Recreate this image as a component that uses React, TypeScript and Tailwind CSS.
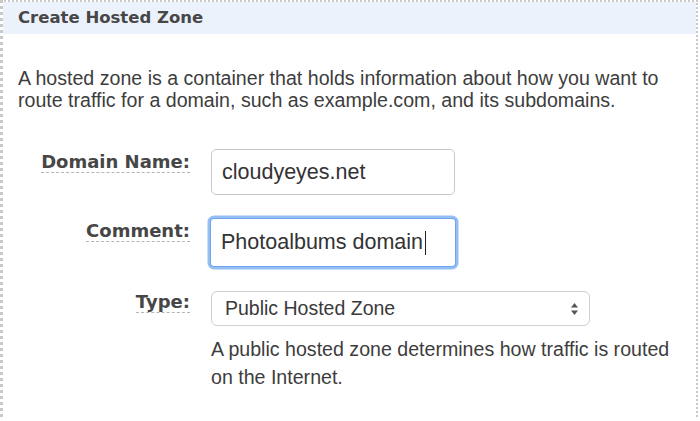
export default function App() {
  return (
    <div className="w-[700px] h-[421px] bg-white overflow-hidden font-['Liberation_Sans',Arial,sans-serif] text-[#3d3d3d]">
      <div className="w-[698px] h-[417px] border-t-2 border-l-[3px] border-r-2 border-dotted border-[#c9c9c9]">
        {/* Header */}
        <div className="h-[32px] bg-[#ebf2fc] flex items-center pl-[15px]">
          <h1 className="font-['DejaVu_Sans',Verdana,sans-serif] font-bold text-[16.5px] text-[#474747] leading-none">
            Create Hosted Zone
          </h1>
        </div>

        {/* Body */}
        <div className="pt-[33px] pl-[15px]">
          <p className="text-[19.6px] leading-[22px] w-[670px]">
            A hosted zone is a container that holds information about how you want to route traffic for a
            domain, such as example.com, and its subdomains.
          </p>

          <div className="mt-[38px] grid grid-cols-[172px_1fr] gap-x-[21px] items-start">
            {/* Domain Name */}
            <div className="flex justify-end pt-[3px]">
              <Label text="Domain Name:" />
            </div>
            <div className="w-[244px] h-[46px] rounded-[5px] border border-[#c8c8c8] bg-white flex items-center pl-[10px] text-[21.5px] text-[#333]">
              cloudyeyes.net
            </div>

            {/* Comment */}
            <div className="flex justify-end pt-[2px] mt-[24px]">
              <Label text="Comment:" />
            </div>
            <div className="mt-[24px] w-[244px] h-[47px] rounded-[3px] bg-white flex items-center pl-[10px] text-[21.5px] text-[#333] shadow-[0_0_0_1px_#6fa4ee,0_0_0_3.5px_#94bff5]">
              <span>Photoalbums domain</span>
              <span className="inline-block w-[1px] h-[24px] bg-[#222] ml-[2px]" />
            </div>

            {/* Type */}
            <div className="flex justify-end pt-[1px] mt-[25px]">
              <Label text="Type:" />
            </div>
            <div className="mt-[25px]">
              <div className="w-[379px] h-[35px] rounded-[6px] border border-[#cfcfcf] bg-white flex items-center justify-between pl-[13px] pr-[10px] text-[19.5px] text-[#3a3a3a]">
                <span>Public Hosted Zone</span>
                <svg width="9" height="14" viewBox="0 0 9 14" className="text-[#555]">
                  <path d="M4.5 1 L8 5.5 H1 Z" fill="currentColor" />
                  <path d="M4.5 13 L8 8.5 H1 Z" fill="currentColor" />
                </svg>
              </div>
              <p className="mt-[9px] w-[482px] text-[19.6px] leading-[28px] text-[#3d3d3d]">
                A public hosted zone determines how traffic is routed on the Internet.
              </p>
            </div>
          </div>
        </div>
      </div>
    </div>
  );
}

function Label({ text }: { text: string }) {
  return (
    <span className="inline-block font-['DejaVu_Sans',Verdana,sans-serif] font-bold text-[18px] leading-[20px] text-[#464646] border-b border-dashed border-[#b5b5b5]">
      {text}
    </span>
  );
}
